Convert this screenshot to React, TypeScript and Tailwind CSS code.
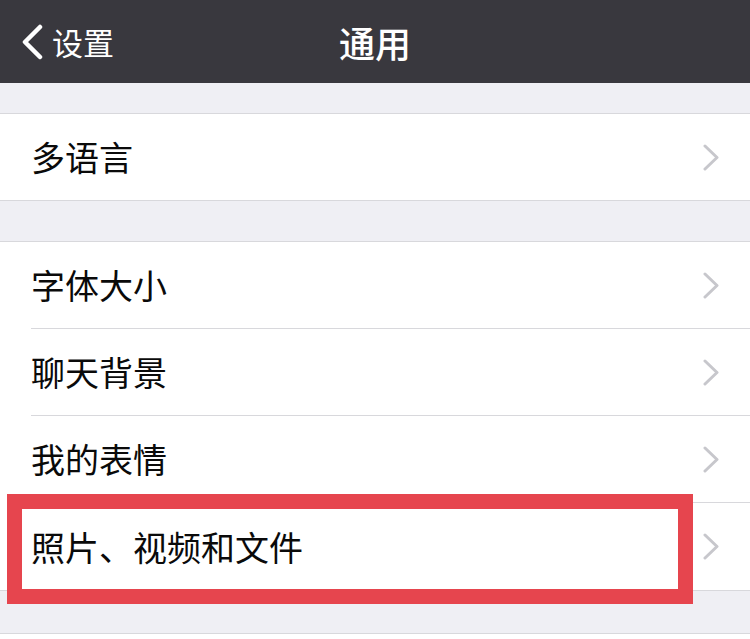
import type { ReactNode } from "react";

const font = { fontFamily: '"Noto Sans CJK SC", "Noto Sans", sans-serif' };

function Chevron() {
  return (
    <svg width="17" height="27" viewBox="0 0 17 27" className="shrink-0">
      <polyline points="2,2 14,13.5 2,25" fill="none" stroke="#c7c7cc" strokeWidth="3" strokeLinecap="round" strokeLinejoin="round" />
    </svg>
  );
}

function Row({ label, last = false, tall = false }: { label: string; last?: boolean; tall?: boolean }) {
  return (
    <div className={`flex items-center pl-[31px] ${tall ? "h-[87px]" : "h-[86px]"}`}>
      <div className={`flex h-full flex-1 items-center justify-between pr-[30px] ${last ? "" : "border-b border-[#d8d8dc]"}`}>
        <span className="text-[34px] leading-none text-[#0a0a0a]">{label}</span>
        <Chevron />
      </div>
    </div>
  );
}

function Group({ children }: { children: ReactNode }) {
  return <div className="border-y border-[#d8d8dc] bg-white">{children}</div>;
}

export default function App() {
  return (
    <div className="relative h-[639px] w-[750px] overflow-hidden bg-[#efeff4]" style={font}>
      <header className="relative flex h-[83px] items-center justify-center bg-[#39383e]">
        <div className="absolute left-[20px] top-0 flex h-full items-center gap-[8px]">
          <svg width="24" height="36" viewBox="0 0 24 36">
            <polyline points="20,3 5,18 20,33" fill="none" stroke="#ffffff" strokeWidth="4.5" strokeLinecap="round" strokeLinejoin="round" />
          </svg>
          <span className="text-[31px] leading-none text-white">设置</span>
        </div>
        <h1 className="text-[36px] font-medium leading-none text-white">通用</h1>
      </header>

      <div className="h-[30px]" />
      <Group>
        <Row label="多语言" last />
      </Group>

      <div className="h-[40px]" />
      <Group>
        <Row label="字体大小" tall />
        <Row label="聊天背景" tall />
        <Row label="我的表情" tall />
        <Row label="照片、视频和文件" last tall />
      </Group>

      <div className="h-[42px]" />
      <div className="h-[20px] border-t border-[#d8d8dc] bg-white" />

      <div className="absolute left-[7px] top-[494px] h-[110px] w-[686px] border-[15px] border-[#e6454e]" />
    </div>
  );
}
